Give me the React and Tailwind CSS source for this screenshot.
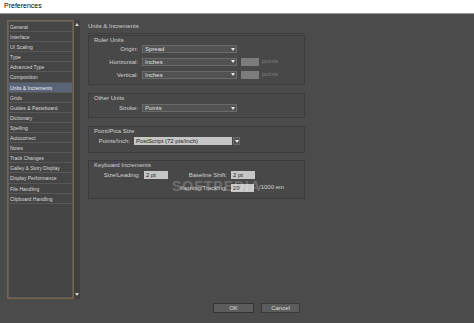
import React from 'react';

const items = [
    'General',
    'Interface',
    'UI Scaling',
    'Type',
    'Advanced Type',
    'Composition',
    'Units & Increments',
    'Grids',
    'Guides & Pasteboard',
    'Dictionary',
    'Spelling',
    'Autocorrect',
    'Notes',
    'Track Changes',
    'Galley & Story Display',
    'Display Performance',
    'File Handling',
    'Clipboard Handling',
];

const Select = ({ value, width = 'w-[95px]', split = false }) => (
    <div className={`flex h-[8px] ${width} border border-[#6a6a6a] bg-[#525252]`}>
        <div className="flex-1 pl-[2px] leading-[6px] text-[6px] text-[#e0e0e0] truncate">{value}</div>
        <div className={`w-[7px] flex items-center justify-center ${split ? 'border-l border-[#6a6a6a]' : ''}`}>
            <svg width="4" height="3" viewBox="0 0 4 3"><path d="M0 0h4L2 3z" fill="#e8e8e8" /></svg>
        </div>
    </div>
);

const Label = ({ children, w = 'w-[53px]' }) => (
    <div className={`${w} text-right pr-[4px] text-[6px] leading-[8px] text-[#d2d2d2]`}>{children}</div>
);

const Group = ({ title, className, children }) => (
    <div className={`border border-[#3c3c3c] bg-[#484848] ${className}`}>
        <div className="h-[8px] leading-[8px] pl-[5px] text-[6px] text-[#d2d2d2]">{title}</div>
        {children}
    </div>
);

const App = () => {
    return (
        <div className="w-[474px] h-[323px] bg-[#4b4b4b] flex flex-col overflow-hidden relative" style={{ fontFamily: '"Liberation Sans", Arial, sans-serif' }}>
            <div className="h-[14px] bg-white border-b border-[#9a9a9a] flex items-center pl-[4px] text-[7px] text-black">
                Preferences
            </div>
            <div className="flex flex-1 pt-[6px] pl-[7px] pb-[10px]">
                <div className="flex h-[279px]">
                    <div className="w-[67px] border border-[#7a6449] bg-[#454545] p-[0px]">
                        <div className="border border-[#5c5c5c] h-full">
                            {items.map((it) => (
                                <div
                                    key={it}
                                    className={`h-[10.1px] leading-[10px] pl-[1px] text-[5px] border-b border-[#575757] whitespace-nowrap ${it === 'Units & Increments' ? 'bg-[#5a6478] text-[#eef0f4]' : 'text-[#d8d8d8]'}`}
                                >
                                    {it}
                                </div>
                            ))}
                        </div>
                    </div>
                    <div className="w-[6px] bg-[#404040] flex flex-col items-center justify-between py-[3px]">
                        <svg width="4" height="3" viewBox="0 0 4 3"><path d="M0 3h4L2 0z" fill="#cfcfcf" /></svg>
                        <svg width="4" height="3" viewBox="0 0 4 3"><path d="M0 0h4L2 3z" fill="#cfcfcf" /></svg>
                    </div>
                </div>
                <div className="ml-[8px] w-[217px] flex flex-col">
                    <div className="h-[14px] border-b border-[#3e3e3e] text-[6px] leading-[12px] text-[#d2d2d2]">
                        Units &amp; Increments
                    </div>
                    <Group title="Ruler Units" className="mt-[1px] pb-[5px]">
                        <div className="flex flex-col gap-[4px] mt-[1px]">
                            <div className="flex items-center">
                                <Label>Origin:</Label>
                                <Select value="Spread" />
                            </div>
                            <div className="flex items-center">
                                <Label>Horizontal:</Label>
                                <Select value="Inches" />
                                <div className="ml-[4px] w-[18px] h-[8px] bg-[#7c7c7c]" />
                                <div className="ml-[3px] text-[6px] text-[#7f7f7f]">points</div>
                            </div>
                            <div className="flex items-center">
                                <Label>Vertical:</Label>
                                <Select value="Inches" />
                                <div className="ml-[4px] w-[18px] h-[8px] bg-[#7c7c7c]" />
                                <div className="ml-[3px] text-[6px] text-[#7f7f7f]">points</div>
                            </div>
                        </div>
                    </Group>
                    <Group title="Other Units" className="mt-[8px] pb-[5px]">
                        <div className="flex items-center mt-[2px]">
                            <Label>Stroke:</Label>
                            <Select value="Points" />
                        </div>
                    </Group>
                    <Group title="Point/Pica Size" className="mt-[8px] pb-[7px]">
                        <div className="flex items-center mt-[2px]">
                            <Label w="w-[45px]">Points/Inch:</Label>
                            <div className="flex h-[8px] w-[106px]">
                                <div className="flex-1 bg-[#c6c6c6] text-[6px] leading-[8px] pl-[2px] text-[#1e1e1e] truncate">PostScript (72 pts/inch)</div>
                                <div className="w-[7px] ml-[1px] bg-[#525252] border border-[#6a6a6a] flex items-center justify-center">
                                    <svg width="4" height="3" viewBox="0 0 4 3"><path d="M0 0h4L2 3z" fill="#e8e8e8" /></svg>
                                </div>
                            </div>
                        </div>
                    </Group>
                    <Group title="Keyboard Increments" className="mt-[7px] pb-[6px]">
                        <div className="flex flex-col gap-[4px] mt-[2px]">
                            <div className="flex items-center">
                                <Label w="w-[55px]">Size/Leading:</Label>
                                <div className="w-[24px] h-[8px] bg-[#c6c6c6] text-[6px] leading-[8px] pl-[2px] text-[#1e1e1e]">2 pt</div>
                                <Label w="w-[63px]">Baseline Shift:</Label>
                                <div className="w-[24px] h-[8px] bg-[#c6c6c6] text-[6px] leading-[8px] pl-[2px] text-[#1e1e1e]">2 pt</div>
                            </div>
                            <div className="flex items-center">
                                <Label w="w-[142px]">Kerning/Tracking:</Label>
                                <div className="w-[23px] h-[8px] bg-[#c6c6c6] text-[6px] leading-[8px] pl-[2px] text-[#1e1e1e]">20</div>
                                <div className="ml-[5px] text-[6px] text-[#d2d2d2]">/1000 em</div>
                            </div>
                        </div>
                    </Group>
                    <div className="mt-auto flex pl-[125px] gap-[7px]">
                        <div className="w-[41px] h-[10px] bg-[#5c5c5c] border border-[#333333] text-[6px] leading-[8px] text-center text-[#dcdcdc]">OK</div>
                        <div className="w-[39px] h-[10px] bg-[#5c5c5c] border border-[#3a3a3a] text-[6px] leading-[8px] text-center text-[#dcdcdc]">Cancel</div>
                    </div>
                </div>
            </div>
            <div className="absolute left-[172px] top-[176px] text-[14px] font-bold tracking-[1px] text-white opacity-20 pointer-events-none">
                SOFTPEDIA
            </div>
        </div>
    );
};

export default App;
